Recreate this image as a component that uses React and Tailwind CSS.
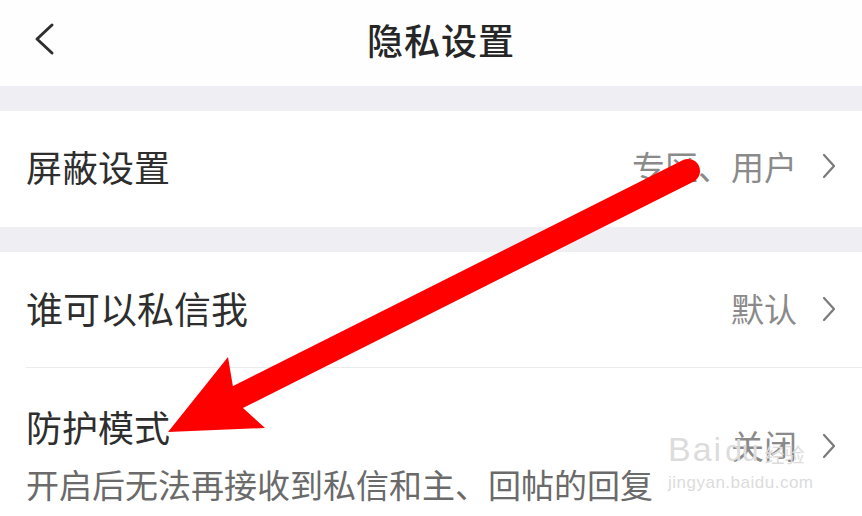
import React from "react";

const font = { fontFamily: '"Noto Sans CJK SC", "Noto Sans", sans-serif' };

function Chevron() {
  return (
    <svg width="16" height="26" viewBox="0 0 16 26" className="shrink-0">
      <polyline points="3,2 13,13 3,24" fill="none" stroke="#7a7a7a" strokeWidth="2.2" strokeLinecap="round" strokeLinejoin="round" />
    </svg>
  );
}

export default function App() {
  return (
    <div className="relative w-[862px] h-[516px] overflow-hidden bg-white text-[#2b2b2b]" style={font}>
      {/* header */}
      <div className="grid grid-cols-[1fr_auto_1fr] items-center h-[86px] pb-[8px] bg-[#fefefe]">
        <div className="pl-[33px] flex items-center">
          <svg width="24" height="34" viewBox="0 0 24 34">
            <polyline points="19,3 4,17 19,31" fill="none" stroke="#2f2f2f" strokeWidth="3" strokeLinecap="round" strokeLinejoin="round" />
          </svg>
        </div>
        <div className="text-[36px] leading-none font-medium text-[#262626] tracking-[1px] ml-[20px]">隐私设置</div>
        <div />
      </div>
      <div className="h-[25px] bg-[#efeff3]" />

      {/* row 1 */}
      <div className="h-[116px] flex items-center justify-between pl-[26px] pr-[25px] pb-[6px]">
        <div className="text-[36px] leading-none text-[#2e2e2e]">屏蔽设置</div>
        <div className="flex items-center gap-[24px] text-[33px] leading-none text-[#8a8a8a]">
          <span>专区、用户</span>
          <Chevron />
        </div>
      </div>
      <div className="h-[25px] bg-[#efeff3]" />

      {/* row 2 */}
      <div className="h-[115px] flex items-center justify-between pl-[26px] pr-[25px] pb-[2px]">
        <div className="text-[37px] leading-none text-[#2e2e2e]">谁可以私信我</div>
        <div className="flex items-center gap-[24px] text-[33px] leading-none text-[#8a8a8a]">
          <span>默认</span>
          <Chevron />
        </div>
      </div>
      <div className="ml-[26px] h-px bg-[#ececec]" />

      {/* row 3 */}
      <div className="flex items-center justify-between pl-[26px] pr-[25px] pt-[40px]">
        <div className="flex flex-col gap-[24px]">
          <div className="text-[36px] leading-none text-[#2e2e2e]">防护模式</div>
          <div className="text-[33px] leading-none text-[#6a6a6a]">开启后无法再接收到私信和主、回帖的回复</div>
        </div>
        <div className="flex items-center gap-[24px] text-[33px] leading-none text-[#8a8a8a] mt-[-18px]">
          <span>关闭</span>
          <Chevron />
        </div>
      </div>

      {/* watermark */}
      <div className="absolute left-[668px] top-[432px] flex flex-col items-start text-[#dcdcdc] leading-none pointer-events-none" style={{ fontFamily: '"Liberation Sans", "Noto Sans CJK SC", sans-serif' }}>
        <div className="flex items-end gap-[2px]">
          <span className="text-[34px] tracking-[2px]">Bai</span>
          <span className="text-[30px]">du</span>
          <span className="text-[20px] ml-[4px]">经验</span>
        </div>
        <div className="text-[17px] mt-[8px] tracking-[0.5px]">jingyan.baidu.com</div>
      </div>

      {/* red arrow annotation */}
      <svg className="absolute inset-0 pointer-events-none" width="862" height="516" viewBox="0 0 862 516">
        <line x1="688" y1="171" x2="238" y2="397" stroke="#ff0000" strokeWidth="24" strokeLinecap="round" />
        <polygon points="168,432 228,357 233,387 243,408 265,428" fill="#ff0000" />
      </svg>
    </div>
  );
}
